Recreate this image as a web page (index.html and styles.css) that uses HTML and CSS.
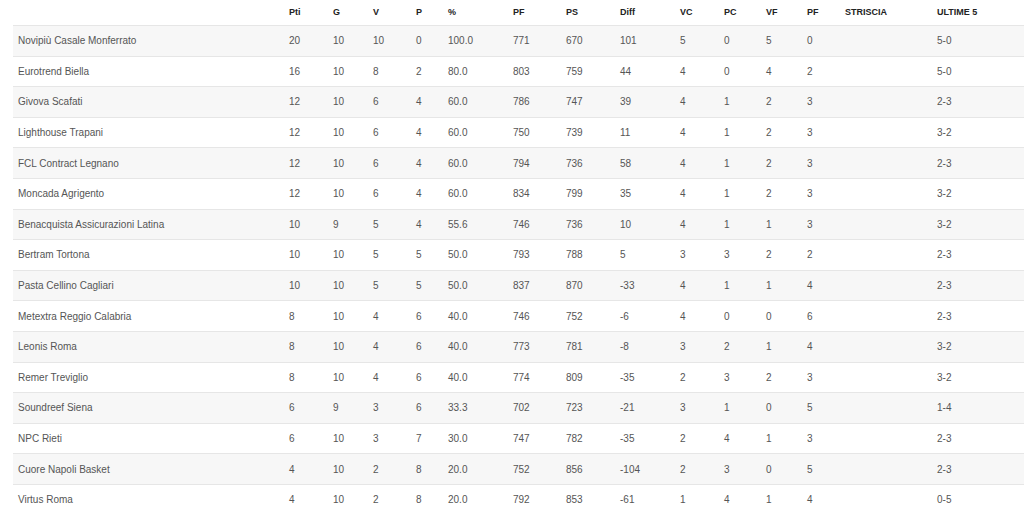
FILE: index.html
```html
<!DOCTYPE html>
<html lang="it">
<head>
<meta charset="utf-8">
<title>Classifica</title>
<link rel="stylesheet" href="styles.css">
</head>
<body>
<div class="wrap">
<table class="standings">
<colgroup>
<col class="c-team"><col class="c-pri"><col class="c-g"><col class="c-v"><col class="c-p"><col class="c-pct"><col class="c-pf"><col class="c-ps"><col class="c-diff"><col class="c-vc"><col class="c-pc"><col class="c-vf"><col class="c-pf2"><col class="c-str"><col class="c-ult">
</colgroup>
<thead>
<tr><th></th><th>Pti</th><th>G</th><th>V</th><th>P</th><th>%</th><th>PF</th><th>PS</th><th>Diff</th><th>VC</th><th>PC</th><th>VF</th><th>PF</th><th>STRISCIA</th><th>ULTIME 5</th></tr>
</thead>
<tbody>
<tr><td>Novipiù Casale Monferrato</td><td>20</td><td>10</td><td>10</td><td>0</td><td>100.0</td><td>771</td><td>670</td><td>101</td><td>5</td><td>0</td><td>5</td><td>0</td><td></td><td>5-0</td></tr>
<tr><td>Eurotrend Biella</td><td>16</td><td>10</td><td>8</td><td>2</td><td>80.0</td><td>803</td><td>759</td><td>44</td><td>4</td><td>0</td><td>4</td><td>2</td><td></td><td>5-0</td></tr>
<tr><td>Givova Scafati</td><td>12</td><td>10</td><td>6</td><td>4</td><td>60.0</td><td>786</td><td>747</td><td>39</td><td>4</td><td>1</td><td>2</td><td>3</td><td></td><td>2-3</td></tr>
<tr><td>Lighthouse Trapani</td><td>12</td><td>10</td><td>6</td><td>4</td><td>60.0</td><td>750</td><td>739</td><td>11</td><td>4</td><td>1</td><td>2</td><td>3</td><td></td><td>3-2</td></tr>
<tr><td>FCL Contract Legnano</td><td>12</td><td>10</td><td>6</td><td>4</td><td>60.0</td><td>794</td><td>736</td><td>58</td><td>4</td><td>1</td><td>2</td><td>3</td><td></td><td>2-3</td></tr>
<tr><td>Moncada Agrigento</td><td>12</td><td>10</td><td>6</td><td>4</td><td>60.0</td><td>834</td><td>799</td><td>35</td><td>4</td><td>1</td><td>2</td><td>3</td><td></td><td>3-2</td></tr>
<tr><td>Benacquista Assicurazioni Latina</td><td>10</td><td>9</td><td>5</td><td>4</td><td>55.6</td><td>746</td><td>736</td><td>10</td><td>4</td><td>1</td><td>1</td><td>3</td><td></td><td>3-2</td></tr>
<tr><td>Bertram Tortona</td><td>10</td><td>10</td><td>5</td><td>5</td><td>50.0</td><td>793</td><td>788</td><td>5</td><td>3</td><td>3</td><td>2</td><td>2</td><td></td><td>2-3</td></tr>
<tr><td>Pasta Cellino Cagliari</td><td>10</td><td>10</td><td>5</td><td>5</td><td>50.0</td><td>837</td><td>870</td><td>-33</td><td>4</td><td>1</td><td>1</td><td>4</td><td></td><td>2-3</td></tr>
<tr><td>Metextra Reggio Calabria</td><td>8</td><td>10</td><td>4</td><td>6</td><td>40.0</td><td>746</td><td>752</td><td>-6</td><td>4</td><td>0</td><td>0</td><td>6</td><td></td><td>2-3</td></tr>
<tr><td>Leonis Roma</td><td>8</td><td>10</td><td>4</td><td>6</td><td>40.0</td><td>773</td><td>781</td><td>-8</td><td>3</td><td>2</td><td>1</td><td>4</td><td></td><td>3-2</td></tr>
<tr><td>Remer Treviglio</td><td>8</td><td>10</td><td>4</td><td>6</td><td>40.0</td><td>774</td><td>809</td><td>-35</td><td>2</td><td>3</td><td>2</td><td>3</td><td></td><td>3-2</td></tr>
<tr><td>Soundreef Siena</td><td>6</td><td>9</td><td>3</td><td>6</td><td>33.3</td><td>702</td><td>723</td><td>-21</td><td>3</td><td>1</td><td>0</td><td>5</td><td></td><td>1-4</td></tr>
<tr><td>NPC Rieti</td><td>6</td><td>10</td><td>3</td><td>7</td><td>30.0</td><td>747</td><td>782</td><td>-35</td><td>2</td><td>4</td><td>1</td><td>3</td><td></td><td>2-3</td></tr>
<tr><td>Cuore Napoli Basket</td><td>4</td><td>10</td><td>2</td><td>8</td><td>20.0</td><td>752</td><td>856</td><td>-104</td><td>2</td><td>3</td><td>0</td><td>5</td><td></td><td>2-3</td></tr>
<tr><td>Virtus Roma</td><td>4</td><td>10</td><td>2</td><td>8</td><td>20.0</td><td>792</td><td>853</td><td>-61</td><td>1</td><td>4</td><td>1</td><td>4</td><td></td><td>0-5</td></tr>
</tbody>
</table>
</div>
</body>
</html>
```
FILE: styles.css
```css
html, body {
  margin: 0;
  padding: 0;
  background: #ffffff;
  overflow: hidden;
}
.wrap {
  padding-left: 13px;
  width: 1040px;
}
.standings {
  border-collapse: collapse;
  table-layout: fixed;
  width: 1040px;
  font-family: "Liberation Sans", Arial, sans-serif;
  font-size: 10px;
  color: #555555;
}
.c-team { width: 271px; }
.c-pri { width: 44px; }
.c-g { width: 40px; }
.c-v { width: 43px; }
.c-p { width: 32px; }
.c-pct { width: 65px; }
.c-pf { width: 53px; }
.c-ps { width: 54px; }
.c-diff { width: 60px; }
.c-vc { width: 44px; }
.c-pc { width: 42px; }
.c-vf { width: 41px; }
.c-pf2 { width: 38px; }
.c-str { width: 92px; }
.c-ult { width: auto; }
.standings th {
  height: 23px;
  padding: 0 0 2px 5px;
  text-align: left;
  vertical-align: middle;
  font-size: 9px;
  font-weight: bold;
  color: #222222;
  border-bottom: 1px solid #e6e6e6;
}
.standings td {
  height: 29.6px;
  padding: 0 0 0 5px;
  text-align: left;
  vertical-align: middle;
  border-bottom: 1px solid #e6e6e6;
  white-space: nowrap;
}
.standings tbody tr:nth-child(odd) td {
  background: #f7f7f7;
}
```
